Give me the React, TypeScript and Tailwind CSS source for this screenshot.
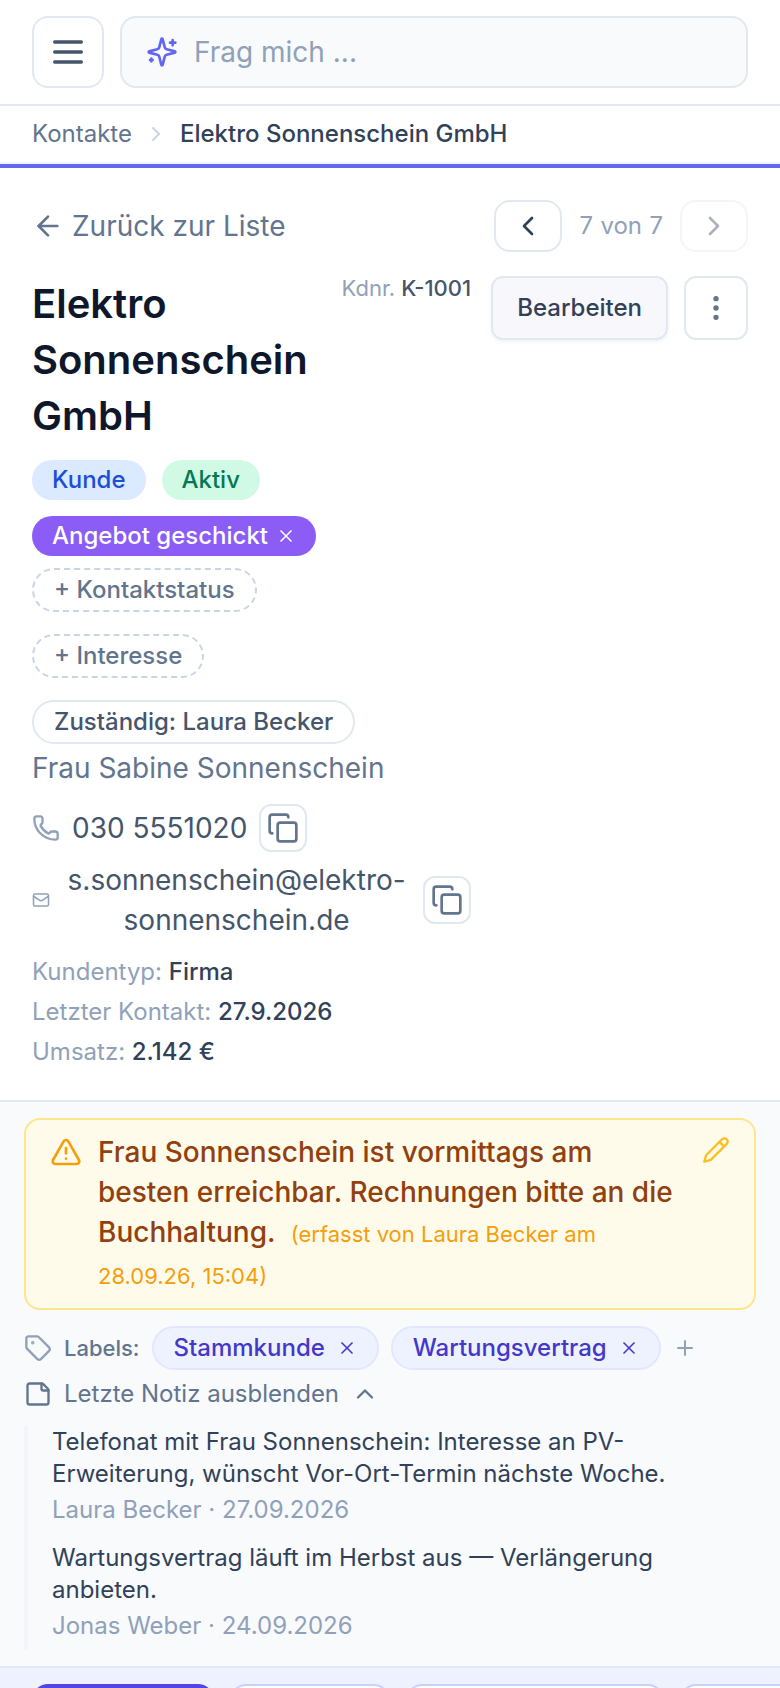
import type { ReactNode } from 'react';
import {
  ArrowLeft,
  ChevronLeft,
  ChevronRight,
  ChevronUp,
  Copy,
  EllipsisVertical,
  Mail,
  Phone,
  Plus,
  StickyNote,
  Tag,
  TriangleAlert,
  X,
} from 'lucide-react';

const notes = [
  {
    text: 'Telefonat mit Frau Sonnenschein: Interesse an PV-Erweiterung, wünscht Vor-Ort-Termin nächste Woche.',
    author: 'Laura Becker',
    date: '27.09.2026',
  },
  {
    text: 'Wartungsvertrag läuft im Herbst aus — Verlängerung anbieten.',
    author: 'Jonas Weber',
    date: '24.09.2026',
  },
];

const facts = [
  { label: 'Kundentyp', value: 'Firma' },
  { label: 'Letzter Kontakt', value: '27.9.2026' },
  { label: 'Umsatz', value: '2.142 €' },
];

function MenuIcon() {
  return (
    <svg className="size-10" viewBox="0 0 24 24" fill="none" stroke="currentColor" strokeWidth={2} strokeLinecap="round">
      <path d="M4 6h16M4 12h16M4 18h16" />
    </svg>
  );
}

function SparklesIcon() {
  return (
    <svg className="size-8 shrink-0 text-[#6366f1]" viewBox="0 0 24 24" fill="none" stroke="currentColor" strokeWidth={2} strokeLinecap="round" strokeLinejoin="round">
      <path d="M9.937 15.5A2 2 0 0 0 8.5 14.063l-6.135-1.582a.5.5 0 0 1 0-.962L8.5 9.936A2 2 0 0 0 9.937 8.5l1.582-6.135a.5.5 0 0 1 .963 0L14.063 8.5A2 2 0 0 0 15.5 9.937l6.135 1.581a.5.5 0 0 1 0 .964L15.5 14.063a2 2 0 0 0-1.437 1.437l-1.582 6.135a.5.5 0 0 1-.963 0z" />
      <path d="M20 3v4M22 5h-4M4 17v2M5 18H3" />
    </svg>
  );
}

function PencilIcon() {
  return (
    <svg className="size-7" viewBox="0 0 24 24" fill="none" stroke="currentColor" strokeWidth={2} strokeLinecap="round" strokeLinejoin="round">
      <path d="M17 3a2.85 2.83 0 1 1 4 4L7.5 20.5 2 22l1.5-5.5Z" />
      <path d="m15 5 4 4" />
    </svg>
  );
}

function CopyButton({ label }: { label: string }) {
  return (
    <button
      type="button"
      aria-label={label}
      className="flex size-12 shrink-0 items-center justify-center rounded-xl border-2 border-slate-200 bg-white text-slate-500"
    >
      <Copy className="size-8 shrink-0" />
    </button>
  );
}

function AddChip({ children }: { children: ReactNode }) {
  return (
    <button
      type="button"
      className="rounded-full border-2 border-dashed border-slate-300 px-5 py-1 text-2xl font-medium text-slate-500"
    >
      {children}
    </button>
  );
}

function LabelChip({ children }: { children: string }) {
  return (
    <span className="flex items-center gap-3 rounded-full border-2 border-[#e0e7ff] bg-[#eef2ff] px-5 py-1 text-2xl font-medium text-[#4338ca]">
      {children}
      <button type="button" aria-label={`${children} entfernen`}>
        <X className="size-5" strokeWidth={2} />
      </button>
    </span>
  );
}

export default function App() {
  return (
    <div className="h-screen overflow-hidden bg-white font-[Inter,sans-serif] text-slate-700">
      <header className="flex gap-4 border-b-2 border-slate-200 px-8 py-4">
        <button
          type="button"
          aria-label="Menü"
          className="flex size-18 shrink-0 items-center justify-center rounded-2xl border-2 border-slate-200 text-slate-600"
        >
          <MenuIcon />
        </button>
        <label className="flex h-18 min-w-0 flex-1 items-center gap-4 rounded-2xl border-2 border-slate-200 bg-slate-50 px-6">
          <SparklesIcon />
          <input
            type="text"
            aria-label="Frag mich"
            placeholder="Frag mich ..."
            className="min-w-0 flex-1 bg-transparent text-[28px] leading-10 outline-none placeholder:text-slate-400"
          />
        </label>
      </header>

      <nav className="flex items-center gap-3 border-b-2 border-slate-100 px-8 py-3 text-2xl">
        <a href="#kontakte" className="text-slate-500">Kontakte</a>
        <ChevronRight className="size-6 text-slate-300" />
        <span className="font-medium text-slate-700">Elektro Sonnenschein GmbH</span>
      </nav>

      <main>
        <section className="border-t-4 border-b-2 border-t-[#6366f1] border-b-slate-200 px-8 pt-8 pb-7">
          <div className="mb-6 flex items-center justify-between">
            <a href="#liste" className="flex items-center gap-2 text-[28px] leading-10 text-slate-500">
              <ArrowLeft className="size-8" />
              Zurück zur Liste
            </a>
            <div className="flex items-center gap-4">
              <button type="button" aria-label="Vorheriger Kontakt" className="rounded-2xl border-2 border-slate-200 px-4 py-2 text-slate-700">
                <ChevronLeft className="size-8" />
              </button>
              <span className="text-2xl text-slate-400 tabular-nums">7 von 7</span>
              <button type="button" disabled aria-label="Nächster Kontakt" className="rounded-2xl border-2 border-slate-200 px-4 py-2 text-slate-700 opacity-40">
                <ChevronRight className="size-8" />
              </button>
            </div>
          </div>

          <div className="flex items-start gap-5">
            <div className="min-w-0 flex-1">
              <div className="flex items-start justify-between gap-4">
                <h1 className="text-[40px] leading-14 font-semibold text-slate-900">Elektro Sonnenschein GmbH</h1>
                <p className="shrink-0 text-[22px] leading-6 text-slate-400">
                  Kdnr. <span className="font-medium text-slate-600">K-1001</span>
                </p>
              </div>

              <div className="mt-4 flex flex-wrap gap-4 text-2xl font-medium">
                <span className="rounded-full bg-[#dbeafe] px-5 py-1 text-[#1d4ed8]">Kunde</span>
                <span className="rounded-full bg-[#d1fae5] px-5 py-1 text-[#047857]">Aktiv</span>
              </div>
              <div className="mt-4 flex">
                <span className="flex items-center gap-2 rounded-full bg-[#8b5cf6] px-5 py-1 text-2xl font-medium text-white">
                  Angebot geschickt
                  <button type="button" aria-label="Status entfernen">
                    <X className="size-5" strokeWidth={2} />
                  </button>
                </span>
              </div>
              <div className="mt-3 flex flex-col items-start gap-[22px]">
                <AddChip>+ Kontaktstatus</AddChip>
                <AddChip>+ Interesse</AddChip>
                <button type="button" className="rounded-full border-2 border-slate-200 px-5 py-1 text-2xl font-medium text-slate-600">
                  Zuständig: Laura Becker
                </button>
              </div>

              <p className="mt-1 text-[28px] leading-10 text-slate-500">Frau Sabine Sonnenschein</p>

              <div className="mt-4 flex items-center gap-3 text-[28px] leading-10 text-slate-600">
                <Phone className="size-7 shrink-0 text-slate-400" />
                <a href="tel:0305551020">030 5551020</a>
                <CopyButton label="Telefonnummer kopieren" />
              </div>
              <div className="mt-2 flex items-center gap-3 text-[28px] leading-10 text-slate-600">
                <Mail className="size-[18px] shrink-0 text-slate-400" />
                <a href="mailto:s.sonnenschein@elektro-sonnenschein.de" className="min-w-0 flex-1 text-center">
                  s.sonnenschein@elektro-sonnenschein.de
                </a>
                <CopyButton label="E-Mail kopieren" />
              </div>

              <ul className="mt-3 text-2xl leading-10 text-slate-400">
                {facts.map((fact) => (
                  <li key={fact.label}>
                    {fact.label}: <span className="font-medium text-slate-700">{fact.value}</span>
                  </li>
                ))}
              </ul>
            </div>

            <div className="flex shrink-0 gap-4">
              <button
                type="button"
                className="h-16 rounded-xl border-2 border-slate-200 bg-[#f8f7fc] px-6 text-2xl font-medium text-slate-700 shadow-[0_2px_4px_rgba(0,0,0,0.05)]"
              >
                Bearbeiten
              </button>
              <button
                type="button"
                aria-label="Weitere Aktionen"
                className="flex size-16 items-center justify-center rounded-xl border-2 border-slate-200 text-slate-500"
              >
                <EllipsisVertical className="size-8" fill="currentColor" />
              </button>
            </div>
          </div>
        </section>

        <section className="bg-slate-50 px-6 py-4">
          <div className="flex items-start gap-4 rounded-2xl border-2 border-[#fde68a] bg-[#fffbeb] px-6 py-3">
            <TriangleAlert className="mt-1 size-8 shrink-0 text-[#f59e0b]" />
            <p className="min-w-0 flex-1 text-[28px] leading-10 font-medium text-[#92400e]">
              Frau Sonnenschein ist vormittags am besten erreichbar. Rechnungen bitte an die Buchhaltung.{' '}
              <span className="ml-2 text-[22px] font-normal text-[#f59e0b]">(erfasst von Laura Becker am 28.09.26, 15:04)</span>
            </p>
            <button type="button" aria-label="Hinweis bearbeiten" className="mt-1 text-[#fbbf24]">
              <PencilIcon />
            </button>
          </div>

          <div className="mt-4 flex items-center gap-3">
            <Tag className="size-7 text-slate-400" />
            <span className="text-[22px] leading-8 font-medium text-slate-500">Labels:</span>
            <LabelChip>Stammkunde</LabelChip>
            <LabelChip>Wartungsvertrag</LabelChip>
            <button type="button" aria-label="Label hinzufügen" className="text-slate-400">
              <Plus className="size-6" />
            </button>
          </div>

          <button type="button" className="mt-2 flex items-center gap-3 text-2xl text-slate-500">
            <StickyNote className="size-7" />
            Letzte Notiz ausblenden
            <ChevronUp className="size-7" />
          </button>

          <ul className="mt-4 flex flex-col gap-4 border-l-4 border-slate-100 pb-2 pl-6 text-2xl">
            {notes.map((note) => (
              <li key={note.date}>
                <p className="text-slate-700">{note.text}</p>
                <p className="mt-1 text-slate-400">{note.author} · {note.date}</p>
              </li>
            ))}
          </ul>
        </section>

        <div className="flex gap-4 overflow-hidden border-t-2 border-[#e0e7ff] bg-[#eef2ff] px-8 py-4">
          <button type="button" aria-label="Übersicht" className="h-16 w-[182px] shrink-0 rounded-2xl bg-[#4f46e5]" />
          <button type="button" aria-label="Belege" className="h-16 w-40 shrink-0 rounded-2xl border-2 border-[#c7d2fe] bg-white" />
          <button type="button" aria-label="Kommunikation" className="h-16 w-[258px] shrink-0 rounded-2xl border-2 border-[#c7d2fe] bg-white" />
          <button type="button" aria-label="Dateien" className="h-16 w-40 shrink-0 rounded-2xl border-2 border-[#c7d2fe] bg-white" />
        </div>
      </main>
    </div>
  );
}
